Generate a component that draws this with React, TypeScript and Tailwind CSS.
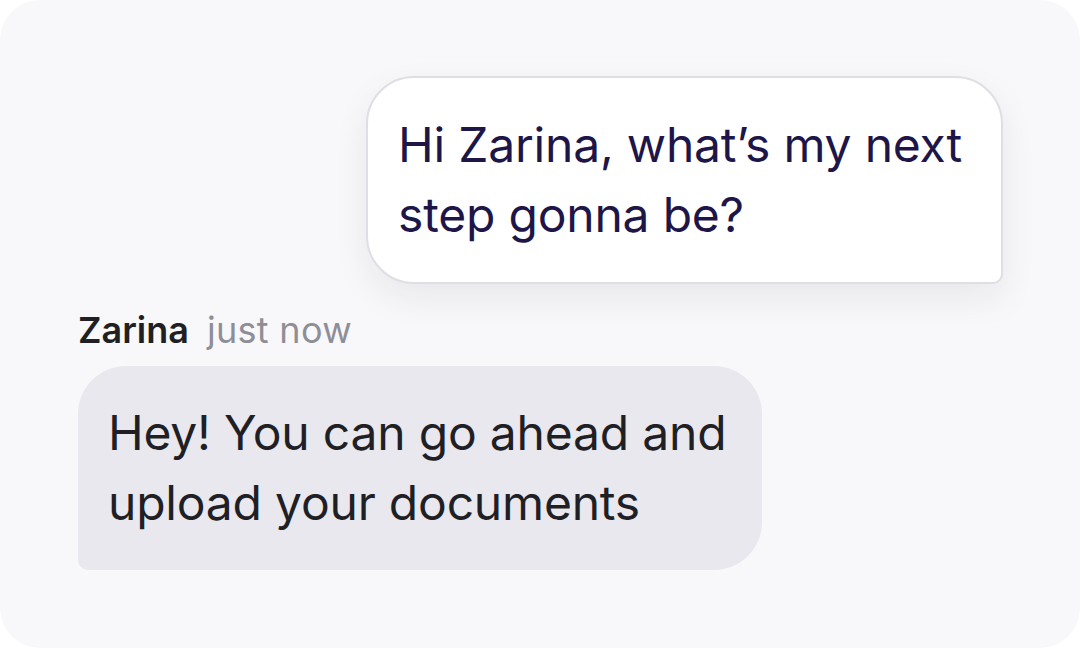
import React from 'react';

export default function App() {
  return (
    <div className="w-[1080px] h-[648px] bg-white" style={{ fontFamily: 'Inter, "Noto Sans", sans-serif' }}>
      {/* chat card */}
      <div className="w-full h-full rounded-[40px] bg-[#f8f8fa] flex flex-col pl-[78px] pr-[77px] pt-[76px]">
        {/* outgoing message */}
        <div className="self-end w-[637px] bg-white border-2 border-[#dedee5] rounded-[48px] rounded-br-[10px] pl-[30px] pr-6 py-8 shadow-[0_14px_36px_rgba(30,30,60,0.07)]">
          <p className="text-[48px] leading-[70px] text-[#1e1548] tracking-[-0.2px]">
            Hi Zarina, what’s my next
            <br />
            step gonna be?
          </p>
        </div>

        {/* sender + time */}
        <div className="flex items-baseline gap-[18px] mt-[24px] h-[44px] leading-[44px]">
          <span className="text-[36px] font-semibold text-[#1f1f24]">Zarina</span>
          <span className="text-[36px] text-[#8e8e98] tracking-[0.3px]">just now</span>
        </div>

        {/* incoming message */}
        <div className="self-start mt-[14px] w-[684px] bg-[#e8e8ee] rounded-[48px] rounded-bl-[10px] pl-[30px] pr-6 py-8">
          <p className="text-[48px] leading-[70px] text-[#1f1f25] tracking-[-0.2px]">
            Hey! You can go ahead and
            <br />
            upload your documents
          </p>
        </div>
      </div>
    </div>
  );
}
